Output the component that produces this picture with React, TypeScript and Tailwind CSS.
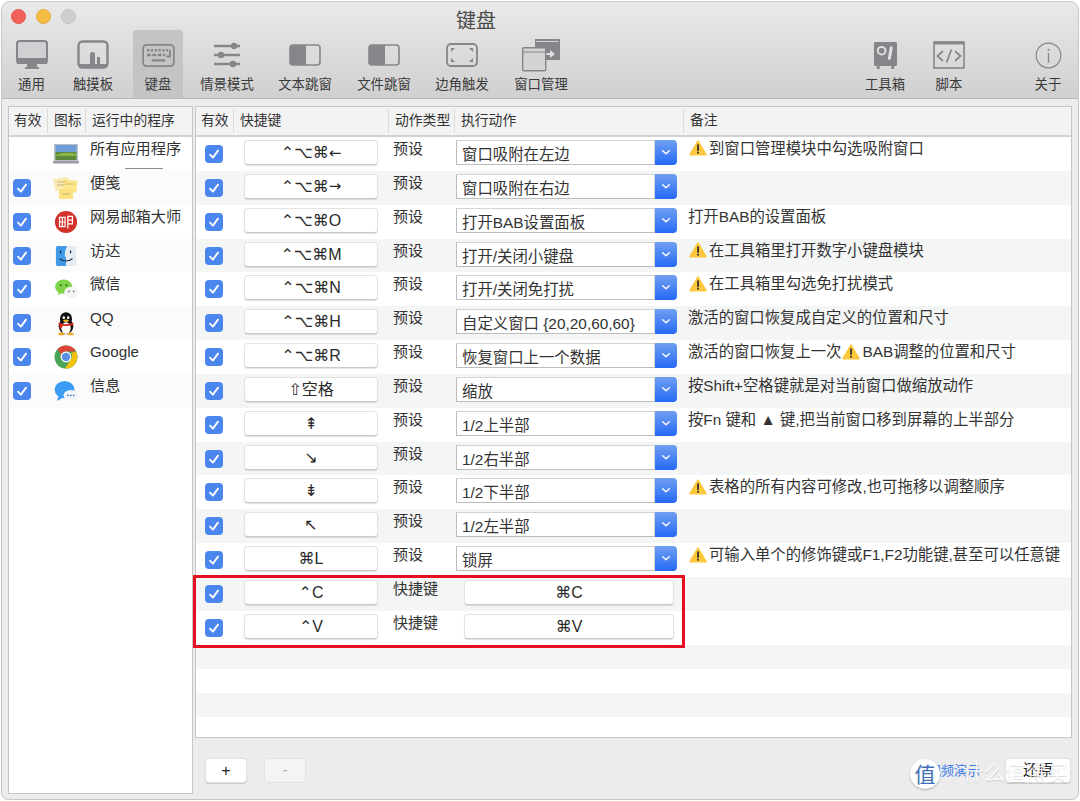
import React from 'react';

const uiFont = "[font-family:'Liberation_Sans','DejaVu_Sans','Noto_Sans_CJK_SC',sans-serif]";
const GRAY = '#85868a';

function Warn() {
  return (
    <svg viewBox="0 0 18 16" className="w-[18px] h-[16px] inline-block shrink-0 ml-[1px] mr-[2px] -mt-[3px] align-middle">
      <path d="M9 1.2 L17 14.6 H1 Z" fill="#fcc73c" stroke="#fcc73c" strokeWidth="1.6" strokeLinejoin="round" />
      <rect x="8.2" y="4.4" width="1.7" height="6.4" fill="#2a2a2a" />
      <rect x="8.2" y="11.8" width="1.7" height="1.8" fill="#2a2a2a" />
    </svg>
  );
}

function Check() {
  return (
    <div className="w-[18px] h-[18px] rounded-[4px] bg-[#4b86ef] flex items-center justify-center shrink-0">
      <svg viewBox="0 0 18 18" className="w-[18px] h-[18px]">
        <path d="M5 9.6 L7.9 12.6 L13 5.6" fill="none" stroke="#fff" strokeWidth="1.8" strokeLinecap="round" strokeLinejoin="round" />
      </svg>
    </div>
  );
}

function KeyBtn({ label, w }: { label: string; w: string }) {
  // the arrows of Liberation Sans are too small, DejaVu's are nearer
  const last = label.slice(-1);
  const isArrow = last === '←' || last === '→';
  return (
    <div className={`${w} h-[25px] pt-[1px] rounded-[4px] bg-white border border-[#e2e2e2] border-b-[#c9c9c9] shadow-[0_1px_1px_rgba(0,0,0,0.12)] flex items-center justify-center text-[16px] text-[#2a2a2a] leading-none`}>
      {isArrow ? (
        <>
          {label.slice(0, -1)}
          <span className="[font-family:'DejaVu_Sans',sans-serif] text-[15px]">{last}</span>
        </>
      ) : (
        label
      )}
    </div>
  );
}

function SelectBox({ label }: { label: string }) {
  return (
    <div className="w-[221px] h-[25px] flex">
      <div className="flex-1 bg-white border border-[#d4d4d4] border-l-[#bcbcbc] border-b-[#bcbcbc] pl-[5px] pt-[3px] text-[15.4px] leading-[22px] text-[#333] whitespace-nowrap overflow-hidden">
        {label}
      </div>
      <div className="w-[22px] rounded-r-[4px] bg-gradient-to-b from-[#6f9ff0] to-[#2468f6] flex items-center justify-center">
        <svg viewBox="0 0 12 8" className="w-[10px] h-[7px]">
          <path d="M2 2 L6 5.6 L10 2" fill="none" stroke="#fff" strokeWidth="1.7" strokeLinecap="round" strokeLinejoin="round" />
        </svg>
      </div>
    </div>
  );
}

/* toolbar icons */
const IconMonitor = () => (
  <svg viewBox="0 0 32 30" className="w-[32px] h-[30px]">
    <rect x="1" y="1" width="30" height="22" rx="2.5" fill="#d0d0d2" stroke={GRAY} strokeWidth="2" />
    <rect x="1" y="18" width="30" height="6" fill={GRAY} />
    <rect x="11" y="24" width="10" height="3" fill={GRAY} />
    <rect x="9" y="27" width="14" height="2" fill={GRAY} />
  </svg>
);
const IconTrackpad = () => (
  <svg viewBox="0 0 32 30" className="w-[32px] h-[30px]">
    <rect x="1.5" y="1.5" width="29" height="26" rx="4" fill="none" stroke={GRAY} strokeWidth="2.4" />
    <rect x="2" y="24" width="28" height="3.5" fill={GRAY} />
    <path d="M13 24 V15 Q13 12 15.5 12 Q18 12 18 15 V24 Z" fill={GRAY} />
    <rect x="20" y="17" width="3" height="7" fill={GRAY} />
  </svg>
);
const IconKeyboard = () => (
  <svg viewBox="0 0 34 24" className="w-[33px] h-[23px]">
    <rect x="1" y="1" width="32" height="22" rx="3.5" fill="none" stroke={GRAY} strokeWidth="1.8" />
    <path d="M5 6.5 H27" stroke={GRAY} strokeWidth="2.4" strokeDasharray="2.4 1.6" />
    <path d="M5 11.5 H24" stroke={GRAY} strokeWidth="2.4" strokeDasharray="4 1.6" />
    <path d="M10 17 H24" stroke={GRAY} strokeWidth="2.4" />
    <path d="M29 6 V13 H25" stroke={GRAY} strokeWidth="2" fill="none" />
  </svg>
);
const IconSliders = () => (
  <svg viewBox="0 0 28 26" className="w-[28px] h-[26px]">
    <path d="M1 4 H27 M1 13 H27 M1 22 H27" stroke={GRAY} strokeWidth="2.6" />
    <circle cx="21" cy="4" r="3.2" fill={GRAY} />
    <circle cx="8" cy="13" r="3.2" fill={GRAY} />
    <circle cx="20" cy="22" r="3.2" fill={GRAY} />
  </svg>
);
const IconHalf = () => (
  <svg viewBox="0 0 32 22" className="w-[32px] h-[22px]">
    <rect x="1" y="1" width="30" height="20" rx="3" fill="none" stroke={GRAY} strokeWidth="1.6" />
    <path d="M4 1 H17 V21 H4 Q1 21 1 18 V4 Q1 1 4 1 Z" fill={GRAY} />
  </svg>
);
const IconCorners = () => (
  <svg viewBox="0 0 32 24" className="w-[32px] h-[24px]">
    <rect x="1" y="1" width="30" height="22" rx="4" fill="none" stroke={GRAY} strokeWidth="1.8" />
    <path d="M5 5 H9 L5 9 Z M27 5 H23 L27 9 Z M5 19 H9 L5 15 Z M27 19 H23 L27 15 Z" fill={GRAY} />
  </svg>
);
const IconWindows = () => (
  <svg viewBox="0 0 40 34" className="w-[40px] h-[34px]">
    <path d="M14 1 H38 Q39 1 39 2 V21 Q39 22 38 22 H14 Z" fill={GRAY} />
    <rect x="15" y="3" width="22" height="1" fill="#d8d8d8" />
    <path d="M24 15 H29 V12 L34 16 L29 20 V17 H24 Z" fill="#e0e0e0" />
    <rect x="1.7" y="9.7" width="23" height="23" rx="1" fill="#d4d4d4" stroke={GRAY} strokeWidth="1.4" />
    <path d="M2 14 H24" stroke={GRAY} strokeWidth="1.2" />
  </svg>
);
const IconSafe = () => (
  <svg viewBox="0 0 26 30" className="w-[25px] h-[29px]">
    <rect x="1" y="1" width="24" height="25" rx="1.5" fill={GRAY} />
    <rect x="4" y="26" width="3" height="3" fill={GRAY} />
    <rect x="19" y="26" width="3" height="3" fill={GRAY} />
    <circle cx="9" cy="10" r="4" fill="none" stroke="#e4e4e4" strokeWidth="2" />
    <path d="M19 7 L17 18" stroke="#e4e4e4" strokeWidth="3" strokeLinecap="round" />
  </svg>
);
const IconCode = () => (
  <svg viewBox="0 0 32 28" className="w-[32px] h-[28px]">
    <rect x="1" y="1" width="30" height="26" fill="none" stroke={GRAY} strokeWidth="1.6" />
    <rect x="1" y="1" width="30" height="2.4" fill={GRAY} />
    <path d="M10 10 L4.5 15 L10 20 M22 10 L27.5 15 L22 20 M18.5 8.5 L13.5 21.5" fill="none" stroke={GRAY} strokeWidth="1.7" />
  </svg>
);
const IconInfo = () => (
  <svg viewBox="0 0 28 28" className="w-[27px] h-[27px]">
    <circle cx="14" cy="14" r="12.8" fill="none" stroke={GRAY} strokeWidth="1.2" />
    <rect x="13.3" y="11.5" width="1.4" height="10" fill={GRAY} />
    <circle cx="14" cy="8" r="1.1" fill={GRAY} />
  </svg>
);

/* app icons for the left list */
const AppDesktop = () => (
  <svg viewBox="0 0 26 22" className="w-[26px] h-[22px]">
    <rect x="1" y="1" width="24" height="17" fill="#b9c0c8" />
    <rect x="2.5" y="2" width="21" height="8" fill="#6f9fd6" />
    <rect x="2.5" y="9" width="21" height="8" fill="#5d8a3a" />
    <path d="M2.5 12 Q12 8 23.5 11 V13 H2.5 Z" fill="#8fb34a" />
    <rect x="0" y="18" width="26" height="2.5" fill="#9a9da1" />
  </svg>
);
const AppStickies = () => (
  <svg viewBox="0 0 26 24" className="w-[26px] h-[24px]">
    <rect x="1" y="2" width="15" height="12" fill="#f8ecb8" transform="rotate(-10 8 8)" />
    <rect x="10" y="4" width="14" height="12" fill="#fbe68c" transform="rotate(6 17 10)" />
    <rect x="6" y="13" width="14" height="10" fill="#fbe27e" />
    <path d="M4 6 H13 M4 9 H12 M13 8 H21 M9 18 H17" stroke="#c9b46a" strokeWidth="1" />
  </svg>
);
const AppMail = () => (
  <svg viewBox="0 0 26 26" className="w-[24px] h-[24px]">
    <circle cx="13" cy="13" r="12" fill="#d2322a" />
    <path d="M6 8 H12 V18 H6 Z M9 8 V18 M6 13 H12 M15 7 H20 V15 H15 Z M15 11 H20 M15 7 V20" fill="none" stroke="#fff" strokeWidth="1.3" />
  </svg>
);
const AppFinder = () => (
  <svg viewBox="0 0 24 24" className="w-[22px] h-[22px]">
    <rect x="1" y="1" width="22" height="22" rx="2" fill="#e6ebf2" />
    <path d="M3 1 H13 Q10 8 11 13 H12 V23 H3 Q1 23 1 21 V3 Q1 1 3 1 Z" fill="#3f9be8" />
    <path d="M6 6 V9 M17 6 V9" stroke="#1c2c44" strokeWidth="1.4" />
    <path d="M5 15 Q12 20 19 15" fill="none" stroke="#1c2c44" strokeWidth="1.2" />
  </svg>
);
const AppWechat = () => (
  <svg viewBox="0 0 26 22" className="w-[25px] h-[21px]">
    <ellipse cx="10" cy="8" rx="9" ry="7.4" fill="#7ed348" />
    <path d="M5 13 L4 17 L9 14 Z" fill="#7ed348" />
    <circle cx="7" cy="6.5" r="1.1" fill="#2f6b16" />
    <circle cx="13" cy="6.5" r="1.1" fill="#2f6b16" />
    <ellipse cx="18" cy="14" rx="7.4" ry="6" fill="#f4f4f4" />
    <circle cx="15.5" cy="13" r="0.9" fill="#777" />
    <circle cx="20.5" cy="13" r="0.9" fill="#777" />
  </svg>
);
const AppQQ = () => (
  <svg viewBox="0 0 24 26" className="w-[22px] h-[25px]">
    <ellipse cx="12" cy="16" rx="8" ry="8.6" fill="#111" />
    <ellipse cx="12" cy="8" rx="6.6" ry="7.4" fill="#111" />
    <ellipse cx="12" cy="18" rx="5.2" ry="6.4" fill="#fff" />
    <circle cx="9.6" cy="6.6" r="1.4" fill="#fff" />
    <circle cx="14.4" cy="6.6" r="1.4" fill="#fff" />
    <ellipse cx="12" cy="10" rx="3.2" ry="1.4" fill="#f5b324" />
    <path d="M4 12 Q12 15.5 20 12 L20 14.5 Q12 17 4 14.5 Z" fill="#d9281e" />
    <path d="M5 14 L5 20 L9 15.5 Z" fill="#d9281e" />
    <ellipse cx="7" cy="24.4" rx="3.6" ry="1.4" fill="#f5a623" />
    <ellipse cx="17" cy="24.4" rx="3.6" ry="1.4" fill="#f5a623" />
  </svg>
);
const AppChrome = () => (
  <svg viewBox="0 0 24 24" className="w-[24px] h-[24px]">
    <circle cx="12" cy="12" r="11.5" fill="#4aa557" />
    <path d="M12 .5 A11.5 11.5 0 0 1 22 6.5 H12 A5.5 5.5 0 0 0 7 9.5 L3.6 4.2 A11.5 11.5 0 0 1 12 .5 Z" fill="#db4437" />
    <path d="M22 6.5 A11.5 11.5 0 0 1 11 23.4 L16.4 15 A5.5 5.5 0 0 0 17 8 Z" fill="#f4c20d" />
    <circle cx="12" cy="12" r="5.4" fill="#fff" />
    <circle cx="12" cy="12" r="4.2" fill="#5b8fe6" />
  </svg>
);
const AppMessages = () => (
  <svg viewBox="0 0 26 24" className="w-[25px] h-[23px]">
    <ellipse cx="11" cy="10" rx="10.4" ry="9" fill="#3c9cf4" />
    <path d="M5 16 L3 22 L10 18 Z" fill="#3c9cf4" />
    <ellipse cx="17.5" cy="16" rx="7.6" ry="5.6" fill="#f2f5f8" />
    <circle cx="14.5" cy="16" r="1" fill="#4a7fc0" />
    <circle cx="17.5" cy="16" r="1" fill="#4a7fc0" />
    <circle cx="20.5" cy="16" r="1" fill="#4a7fc0" />
  </svg>
);

const toolbarLeft = [
  { label: '通用', icon: <IconMonitor />, w: 'w-[59px]' },
  { label: '触摸板', icon: <IconTrackpad />, w: 'w-[64px]' },
  { label: '键盘', icon: <IconKeyboard />, w: 'w-[66px]', active: true },
  { label: '情景模式', icon: <IconSliders />, w: 'w-[72px]' },
  { label: '文本跳窗', icon: <IconHalf />, w: 'w-[84px]' },
  { label: '文件跳窗', icon: <IconHalf />, w: 'w-[74px]' },
  { label: '边角触发', icon: <IconCorners />, w: 'w-[82px]' },
  { label: '窗口管理', icon: <IconWindows />, w: 'w-[76px]' },
];

const toolbarRight = [
  { label: '工具箱', icon: <IconSafe />, w: 'w-[64px]' },
  { label: '脚本', icon: <IconCode />, w: 'w-[64px]' },
  { label: '关于', icon: <IconInfo />, w: 'w-[60px] ml-[37px]' },
];

type ToolItem = { label: string; icon: React.ReactNode; w: string; active?: boolean };

function ToolbarItem({ item }: { item: ToolItem }) {
  return (
    <div className={`${item.w} flex justify-center`}>
      <div className={`w-[50px] h-[68px] flex flex-col items-center rounded-t-[4px] ${item.active ? 'bg-[#c4c4c4]' : ''}`}>
        <div className="h-[46px] pt-[4px] flex items-center justify-center shrink-0">{item.icon}</div>
        <div className="text-[13.4px] leading-[18px] text-[#3a3a3a] whitespace-nowrap">{item.label}</div>
      </div>
    </div>
  );
}

const apps = [
  { name: '所有应用程序', icon: <AppDesktop />, off: true },
  { name: '便笺', icon: <AppStickies /> },
  { name: '网易邮箱大师', icon: <AppMail /> },
  { name: '访达', icon: <AppFinder /> },
  { name: '微信', icon: <AppWechat /> },
  { name: 'QQ', icon: <AppQQ /> },
  { name: 'Google', icon: <AppChrome /> },
  { name: '信息', icon: <AppMessages /> },
];

type Row = { keys: string; type?: string; action?: string; target?: string; note?: React.ReactNode };

const rows: Row[] = [
  { keys: '⌃⌥⌘←', action: '窗口吸附在左边', note: <><Warn />到窗口管理模块中勾选吸附窗口</> },
  { keys: '⌃⌥⌘→', action: '窗口吸附在右边' },
  { keys: '⌃⌥⌘O', action: '打开BAB设置面板', note: '打开BAB的设置面板' },
  { keys: '⌃⌥⌘M', action: '打开/关闭小键盘', note: <><Warn />在工具箱里打开数字小键盘模块</> },
  { keys: '⌃⌥⌘N', action: '打开/关闭免打扰', note: <><Warn />在工具箱里勾选免打扰模式</> },
  { keys: '⌃⌥⌘H', action: '自定义窗口 {20,20,60,60}', note: '激活的窗口恢复成自定义的位置和尺寸' },
  { keys: '⌃⌥⌘R', action: '恢复窗口上一个数据', note: <>激活的窗口恢复上一次<Warn />BAB调整的位置和尺寸</> },
  { keys: '⇧空格', action: '缩放', note: '按Shift+空格键就是对当前窗口做缩放动作' },
  { keys: '⇞', action: '1/2上半部', note: '按Fn 键和 ▲ 键,把当前窗口移到屏幕的上半部分' },
  { keys: '↘', action: '1/2右半部' },
  { keys: '⇟', action: '1/2下半部', note: <><Warn />表格的所有内容可修改,也可拖移以调整顺序</> },
  { keys: '↖', action: '1/2左半部' },
  { keys: '⌘L', action: '锁屏', note: <><Warn />可输入单个的修饰键或F1,F2功能键,甚至可以任意键</> },
  { keys: '⌃C', type: '快捷键', target: '⌘C' },
  { keys: '⌃V', type: '快捷键', target: '⌘V' },
];

function HeaderCell({ label, w, first }: { label: string; w: string; first?: boolean }) {
  return (
    <div className={`${w} h-full flex items-center`}>
      {!first && <div className="w-px h-[24px] bg-[#dcdcdc] shrink-0" />}
      <div className={`${first ? 'pl-[5px]' : 'pl-[6px]'} text-[13.8px] text-[#333] whitespace-nowrap`}>{label}</div>
    </div>
  );
}

export default function App() {
  return (
    <div className={`w-[1080px] h-[801px] bg-white pt-px px-px overflow-hidden relative ${uiFont}`}>
      <div className="h-[799px] rounded-t-[9px] rounded-b-[7px] border border-[#c6c6c6] bg-[#ececec] flex flex-col overflow-hidden">
        {/* title bar and toolbar */}
        <div className="h-[97px] shrink-0 bg-gradient-to-b from-[#e9e9e9] to-[#d0d0d0] border-b border-[#b9b9b9] flex flex-col">
          <div className="h-[28px] flex items-center pl-[9px] gap-[10px] shrink-0">
            <div className="w-[15px] h-[15px] rounded-full bg-[#f2625a] border border-[#e0534b]" />
            <div className="w-[15px] h-[15px] rounded-full bg-[#f6bd45] border border-[#e3a93a]" />
            <div className="w-[15px] h-[15px] rounded-full bg-[#cfcfcf] border border-[#c2c2c2]" />
            <div className="ml-[370px] pt-[10px] text-[20px] leading-[28px] text-[#4a4a4a]">键盘</div>
          </div>
          <div className="flex">
            {toolbarLeft.map((t) => (
              <ToolbarItem key={t.label} item={t} />
            ))}
            <div className="flex-1" />
            {toolbarRight.map((t) => (
              <ToolbarItem key={t.label} item={t} />
            ))}
          </div>
        </div>

        {/* body */}
        <div className="flex-1 flex pl-[6px] pr-[6px] pt-[7px] gap-[2px]">
          {/* running apps */}
          <div className="w-[185px] h-[688px] shrink-0 bg-white border border-[#c6c6c6] relative">
            <div className="h-[30px] bg-[#f3f3f3] border-b-2 border-[#d2d2d2] flex items-center">
              <HeaderCell label="有效" w="w-[38px]" first />
              <HeaderCell label="图标" w="w-[38px]" />
              <HeaderCell label="运行中的程序" w="flex-1" />
            </div>
            {apps.map((a, i) => (
              <div key={a.name} className={`h-[33.85px] flex ${i % 2 ? 'bg-[#fbfbfb]' : 'bg-white'}`}>
                <div className="w-[38px] pl-[4px] pt-[8px]">{!a.off && <Check />}</div>
                <div className="w-[38px] flex justify-center items-center pt-[1px]">{a.icon}</div>
                <div className="flex-1 pl-[5px] pt-[2px] text-[15.2px] leading-[20px] text-[#333]">{a.name}</div>
              </div>
            ))}
            <div className="absolute left-[116px] top-[61px] w-[38px] h-px bg-[#8a8a8a]" />
          </div>

          {/* shortcuts */}
          <div className="flex-1 flex flex-col">
            <div className="h-[632px] bg-white border border-[#c6c6c6] relative">
              <div className="h-[30px] bg-[#f3f3f3] border-b-2 border-[#d2d2d2] flex items-center">
                <HeaderCell label="有效" w="w-[37px]" first />
                <HeaderCell label="快捷键" w="w-[155px]" />
                <HeaderCell label="动作类型" w="w-[66px]" />
                <HeaderCell label="执行动作" w="w-[229px]" />
                <HeaderCell label="备注" w="flex-1" />
              </div>
              {rows.map((r, i) => (
                <div key={r.keys} className={`h-[33.85px] flex ${i % 2 ? 'bg-[#f4f5f5]' : 'bg-white'}`}>
                  <div className="w-[37px] pl-[9px] pt-[8px]"><Check /></div>
                  <div className="w-[155px] pl-[11px] pt-[3px]"><KeyBtn label={r.keys} w="w-[134px]" /></div>
                  <div className="w-[66px] pl-[5px] pt-[2px] text-[15px] leading-[20px] text-[#333]">{r.type ?? '预设'}</div>
                  <div className="w-[229px] pl-[2px] pt-[3px]">
                    {r.target ? (
                      <div className="pl-[8px]"><KeyBtn label={r.target} w="w-[210px]" /></div>
                    ) : (
                      <SelectBox label={r.action ?? ''} />
                    )}
                  </div>
                  <div className="flex-1 pl-[5px] pt-[2px] text-[15.35px] leading-[20px] text-[#333] whitespace-nowrap">{r.note}</div>
                </div>
              ))}
              <div className="h-[24px] bg-[#f4f5f5]" />
              <div className="h-[24px] bg-white" />
              <div className="h-[24px] bg-[#f4f5f5]" />
              <div className="absolute left-[-3px] top-[468px] w-[492px] h-[73px] border-[3px] border-[#e60f22]" />
            </div>

            {/* footer */}
            <div className="flex items-center pt-[20px] pl-[10px]">
              <div className="w-[42px] h-[25px] rounded-[4px] bg-white border border-[#e2e2e2] shadow-[0_1px_1px_rgba(0,0,0,0.15)] flex items-center justify-center text-[16px] text-[#222]">+</div>
              <div className="w-[42px] h-[25px] ml-[17px] rounded-[4px] bg-[#f4f4f4] border border-[#e2e2e2] flex items-center justify-center text-[14px] text-[#aaa]">-</div>
              <div className="flex-1" />
              <div className="text-[13px] text-[#3a7bea] mr-[25px]">视频演示</div>
              <div className="w-[66px] h-[25px] mr-[1px] rounded-[4px] bg-white border border-[#e2e2e2] shadow-[0_1px_1px_rgba(0,0,0,0.15)] flex items-center justify-center text-[15px] text-[#222]">还原</div>
            </div>
          </div>
        </div>
      </div>

      {/* site watermark */}
      <div className="absolute left-[910px] top-[759px] w-[30px] h-[30px] rounded-full bg-white shadow-[0_1px_2px_rgba(0,0,0,0.25)] flex items-center justify-center text-[21px] leading-none text-[#3f6fb8]">值</div>
      <div className="absolute left-[963px] top-[759px] text-[21px] leading-[28px] text-white/85 [text-shadow:0_1px_1px_rgba(0,0,0,0.15)] whitespace-nowrap">什么值得买</div>
    </div>
  );
}
